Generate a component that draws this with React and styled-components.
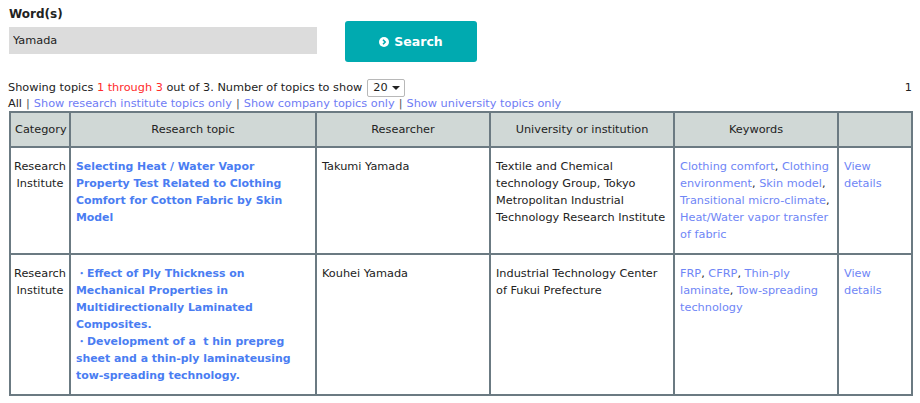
import React from 'react';
import styled, { createGlobalStyle } from 'styled-components';

const GlobalStyle = createGlobalStyle`
  body {
    margin: 0;
    background: #fff;
    color: #222;
    font-family: "DejaVu Sans", "Noto Sans", sans-serif;
    font-size: 11.3px;
  }
`;

const Page = styled.div`
  padding: 0 8px 0 8px;
  width: 904px;
`;

const SearchForm = styled.form`
  display: flex;
  align-items: flex-start;
  padding-top: 6px;
`;

const Field = styled.div`
  display: flex;
  flex-direction: column;
  padding-left: 1px;
`;

const Label = styled.label`
  font-weight: 700;
  font-size: 12px;
  line-height: 16px;
  margin-bottom: 5px;
`;

const Input = styled.input`
  width: 308px;
  height: 27px;
  box-sizing: border-box;
  border: none;
  background: #dcdcdc;
  padding: 0 4px;
  font-family: inherit;
  font-size: 11.3px;
  color: #222;
`;

const SearchButton = styled.button`
  margin: 15px 0 0 28px;
  width: 132px;
  height: 41px;
  border: none;
  border-radius: 3px;
  background: #00aab0;
  color: #fff;
  font-family: inherit;
  font-size: 12.5px;
  font-weight: 700;
  display: flex;
  align-items: center;
  justify-content: center;
  gap: 5px;
`;

const Summary = styled.div`
  margin-top: 17px;
  display: flex;
  justify-content: space-between;
  align-items: center;
  line-height: 18px;
`;

const Red = styled.span`
  color: #ff2b2b;
`;

const Select = styled.span`
  display: inline-flex;
  align-items: center;
  justify-content: space-between;
  box-sizing: border-box;
  width: 38px;
  height: 18px;
  margin-left: 5px;
  padding: 0 4px 0 5px;
  border: 1px solid #b8b8b8;
  border-radius: 2px;
  vertical-align: middle;
`;

const Caret = styled.span`
  width: 0;
  height: 0;
  border-left: 4px solid transparent;
  border-right: 4px solid transparent;
  border-top: 4px solid #222;
`;

const Filters = styled.div`
  line-height: 14px;
`;

const Sep = styled.span`
  color: #555;
  margin: 0 4px;
`;

const FilterLink = styled.a`
  color: #6f7cf5;
  text-decoration: none;
`;

const Table = styled.table`
  border-collapse: collapse;
  table-layout: fixed;
  width: 904px;
  margin-left: 1px;
  line-height: 17px;

  th, td {
    border: 2px solid #6b7a82;
  }
`;

const Th = styled.th`
  background: #d0d8d6;
  font-weight: 400;
  height: 33px;
  padding: 0 4px;
  text-align: center;
`;

const Td = styled.td`
  vertical-align: top;
  padding: 10px 4px 10px 5px;
  text-align: ${(p) => (p.$center ? 'center' : 'left')};
  ${(p) => p.$center && 'padding-left: 1px; padding-right: 1px;'}
`;

const TopicLink = styled.a`
  color: #4a7df2;
  font-weight: 700;
  font-size: 10.9px;
  text-decoration: none;
  display: block;
`;

const Keyword = styled.a`
  color: #6f86f6;
  text-decoration: none;
`;

const SearchIcon = () => (
  <svg width="10" height="10" viewBox="0 0 10 10">
    <circle cx="5" cy="5" r="5" fill="#fff" />
    <path d="M4 2.8 L6.2 5 L4 7.2" stroke="#00aab0" strokeWidth="1.6" fill="none" />
  </svg>
);

const rows = [
  {
    topics: ['Selecting Heat / Water Vapor Property Test Related to Clothing Comfort for Cotton Fabric by Skin Model'],
    researcher: 'Takumi Yamada',
    institution: 'Textile and Chemical technology Group, Tokyo Metropolitan Industrial Technology Research Institute',
    keywords: ['Clothing comfort', 'Clothing environment', 'Skin model', 'Transitional micro-climate', 'Heat/Water vapor transfer of fabric'],
  },
  {
    topics: [
      '\u30FBEffect of Ply Thickness on Mechanical Properties in Multidirectionally Laminated Composites.',
      '\u30FBDevelopment of a \u00A0t hin prepreg sheet and a thin-ply laminateusing tow-spreading technology.',
    ],
    researcher: 'Kouhei Yamada',
    institution: 'Industrial Technology Center of Fukui Prefecture',
    keywords: ['FRP', 'CFRP', 'Thin-ply laminate', 'Tow-spreading technology'],
  },
];

export default function App() {
  return (
    <Page>
      <GlobalStyle />
      <SearchForm onSubmit={(e) => e.preventDefault()}>
        <Field>
          <Label>Word(s)</Label>
          <Input defaultValue="Yamada" />
        </Field>
        <SearchButton type="submit">
          <SearchIcon />
          Search
        </SearchButton>
      </SearchForm>

      <Summary>
        <span>
          Showing topics <Red>1 through 3</Red> out of 3. Number of topics to show
          <Select>
            20
            <Caret />
          </Select>
        </span>
        <span>1</span>
      </Summary>

      <Filters>
        All<Sep>|</Sep>
        <FilterLink href="#">Show research institute topics only</FilterLink>
        <Sep>|</Sep>
        <FilterLink href="#">Show company topics only</FilterLink>
        <Sep>|</Sep>
        <FilterLink href="#">Show university topics only</FilterLink>
      </Filters>

      <Table>
        <colgroup>
          <col style={{ width: 60 }} />
          <col style={{ width: 246 }} />
          <col style={{ width: 174 }} />
          <col style={{ width: 184 }} />
          <col style={{ width: 164 }} />
          <col style={{ width: 74 }} />
        </colgroup>
        <thead>
          <tr>
            <Th>Category</Th>
            <Th>Research topic</Th>
            <Th>Researcher</Th>
            <Th>University or institution</Th>
            <Th>Keywords</Th>
            <Th></Th>
          </tr>
        </thead>
        <tbody>
          {rows.map((r) => (
            <tr key={r.researcher}>
              <Td $center>Research Institute</Td>
              <Td>
                {r.topics.map((t) => (
                  <TopicLink href="#" key={t}>{t}</TopicLink>
                ))}
              </Td>
              <Td>{r.researcher}</Td>
              <Td>{r.institution}</Td>
              <Td>
                {r.keywords.map((k, i) => (
                  <React.Fragment key={k}>
                    <Keyword href="#">{k}</Keyword>
                    {i < r.keywords.length - 1 ? ', ' : ''}
                  </React.Fragment>
                ))}
              </Td>
              <Td>
                <Keyword href="#">View details</Keyword>
              </Td>
            </tr>
          ))}
        </tbody>
      </Table>
    </Page>
  );
}
